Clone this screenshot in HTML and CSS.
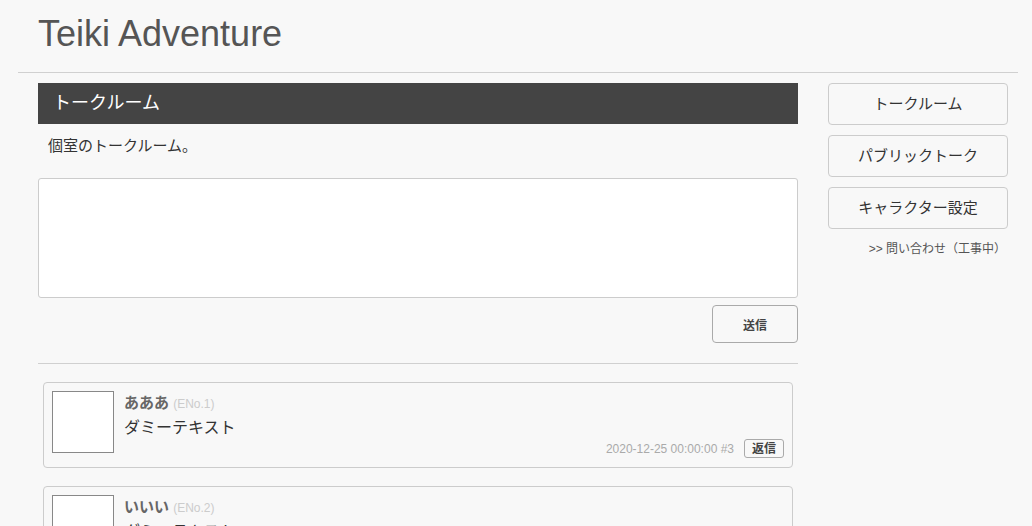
FILE: index.html
```html
<!DOCTYPE html>
<html lang="ja">
<head>
  <meta charset="UTF-8">
  <meta name="viewport" content="width=device-width, initial-scale=1.0">
  <title>Teiki Adventure</title>
  <link rel="stylesheet" href="styles.css">
</head>
<body>
  <div class="page">
    <header class="siteHeader">
      <h1 class="siteTitle">Teiki Adventure</h1>
    </header>
    <div class="layout">
      <main class="main">
        <h2 class="sectionTitle">トークルーム</h2>
        <p class="lead">個室のトークルーム。</p>
        <form class="postForm">
          <textarea class="postText"></textarea>
          <div class="formActions">
            <button type="button" class="sendBtn">送信</button>
          </div>
        </form>
        <hr class="divider">
        <div class="messages">
          <div class="message">
            <div class="icon"></div>
            <div class="body">
              <div class="name">あああ <span class="eno">(ENo.1)</span></div>
              <div class="text">ダミーテキスト</div>
              <div class="meta">
                <span class="date">2020-12-25 00:00:00 #3</span>
                <button type="button" class="replyBtn">返信</button>
              </div>
            </div>
          </div>
          <div class="message">
            <div class="icon"></div>
            <div class="body">
              <div class="name">いいい <span class="eno">(ENo.2)</span></div>
              <div class="text">ダミーテキスト</div>
              <div class="meta">
                <span class="date">2020-12-25 00:00:00 #2</span>
                <button type="button" class="replyBtn">返信</button>
              </div>
            </div>
          </div>
        </div>
      </main>
      <nav class="side">
        <a class="navBtn" href="#">トークルーム</a>
        <a class="navBtn" href="#">パブリックトーク</a>
        <a class="navBtn" href="#">キャラクター設定</a>
        <a class="contact" href="#">&gt;&gt; 問い合わせ（工事中）</a>
      </nav>
    </div>
  </div>
</body>
</html>
```

FILE: styles.css
```css
body{
  margin: 0;
  background-color: #f8f8f8;
  color: #333;
  font-family: "Liberation Sans", "Noto Sans CJK JP", sans-serif;
}
.page{
  width: 1000px;
  margin-left: 18px;
}
.siteHeader{
  padding: 12px 20px 0;
  height: 60px;
  border-bottom: 1px solid #d0d0d0;
}
.siteTitle{
  margin: 0;
  font-size: 36px;
  font-weight: normal;
  color: #555;
  line-height: 44px;
}
.layout{
  display: flex;
  gap: 30px;
  padding: 10px 0 0 20px;
}
.main{
  width: 760px;
}
.sectionTitle{
  margin: 0;
  background-color: #444;
  color: #fff;
  font-size: 18px;
  font-weight: normal;
  height: 41px;
  line-height: 41px;
  padding-left: 15px;
}
.lead{
  margin: 0;
  padding: 11px 10px 0;
  height: 43px;
  font-size: 15px;
  line-height: 22px;
}
.postForm{
  margin: 0;
}
.postText{
  display: block;
  box-sizing: border-box;
  width: 760px;
  height: 120px;
  border: 1px solid #ccc;
  border-radius: 3px;
  background-color: #fff;
  resize: none;
  margin: 0;
}
.formActions{
  display: flex;
  justify-content: flex-end;
  padding-top: 7px;
}
.sendBtn{
  width: 86px;
  height: 38px;
  background-color: #f8f8f8;
  border: 1px solid #aaa;
  border-radius: 4px;
  font-family: inherit;
  font-size: 12px;
  font-weight: bold;
  color: #444;
}
.divider{
  border: none;
  border-top: 1px solid #d0d0d0;
  margin: 20px 0 18px;
}
.messages{
  padding: 0 5px;
  display: grid;
  gap: 18px;
}
.message{
  display: flex;
  gap: 10px;
  border: 1px solid #ccc;
  border-radius: 4px;
  padding: 8px;
  height: 68px;
}
.icon{
  flex: none;
  width: 60px;
  height: 60px;
  background-color: #fff;
  border: 1px solid #888;
}
.body{
  flex: 1;
  display: flex;
  flex-direction: column;
}
.name{
  font-size: 15px;
  font-weight: bold;
  color: #666;
  line-height: 24px;
}
.eno{
  font-size: 12px;
  font-weight: normal;
  color: #ccc;
}
.text{
  font-size: 16px;
  line-height: 24px;
  color: #333;
}
.meta{
  display: flex;
  justify-content: flex-end;
  align-items: center;
  gap: 10px;
  margin-top: -1px;
}
.date{
  font-size: 12px;
  color: #aaa;
}
.replyBtn{
  height: 19px;
  padding: 0 7px;
  background-color: #f8f8f8;
  border: 1px solid #aaa;
  border-radius: 3px;
  font-family: inherit;
  font-size: 12px;
  font-weight: bold;
  color: #444;
  line-height: 16px;
}
.side{
  width: 180px;
  display: flex;
  flex-direction: column;
  gap: 10px;
}
.navBtn{
  display: block;
  height: 40px;
  line-height: 40px;
  border: 1px solid #ccc;
  border-radius: 4px;
  text-align: center;
  text-decoration: none;
  color: #333;
  font-size: 15px;
}
.contact{
  text-align: right;
  padding-right: 2px;
  margin-top: 0;
  font-size: 12px;
  color: #555;
  text-decoration: none;
}
```
